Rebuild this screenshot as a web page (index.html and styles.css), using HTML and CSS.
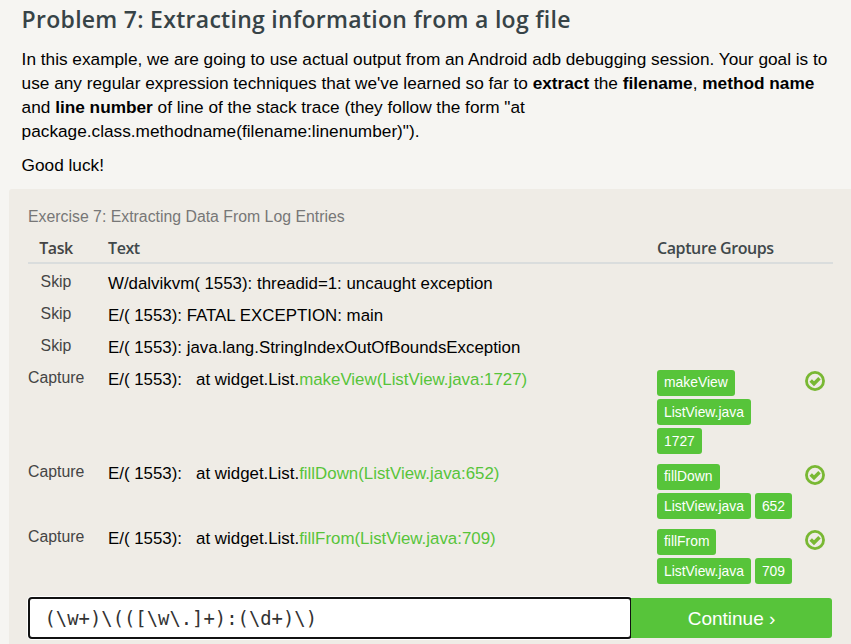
FILE: index.html
```html
<!DOCTYPE html>
<html lang="en">
<head>
<meta charset="utf-8">
<title>Problem 7: Extracting information from a log file</title>
<link rel="stylesheet" href="styles.css">
</head>
<body>
<svg class="defs" width="0" height="0"><symbol id="check" viewBox="0 0 20 20"><circle cx="10" cy="10" r="8.55" fill="none" stroke="currentColor" stroke-width="2.8"/><path d="M5.7 9.4 9 12.7 14.5 7.2" fill="none" stroke="currentColor" stroke-width="3.5"/></symbol></svg>
<section class="lesson">
<h1>Problem 7: Extracting information from a log file</h1>
<p>In this example, we are going to use actual output from an Android adb debugging session. Your goal is to use any regular expression techniques that we've learned so far to <b>extract</b> the <b>filename</b>, <b>method name</b> and <b>line number</b> of line of the stack trace (they follow the form "at package.class.methodname(filename:linenumber)").</p>
<p>Good luck!</p>
</section>
<section class="exercise">
<h2>Exercise 7: Extracting Data From Log Entries</h2>
<div class="row head"><div class="task">Task</div><div>Text</div><div>Capture Groups</div></div>
<div class="row first"><div class="task">Skip</div><div class="text">W/dalvikvm( 1553): threadid=1: uncaught exception</div></div>
<div class="row"><div class="task">Skip</div><div class="text">E/( 1553): FATAL EXCEPTION: main</div></div>
<div class="row"><div class="task">Skip</div><div class="text">E/( 1553): java.lang.StringIndexOutOfBoundsException</div></div>
<div class="row tall"><div class="task">Capture</div><div class="text">E/( 1553):   at widget.List.<span class="match">makeView(ListView.java:1727)</span></div><div class="groups"><span class="tag">makeView</span><span class="tag">ListView.java</span><span class="tag">1727</span></div><svg class="check"><use href="#check"/></svg></div>
<div class="row mid"><div class="task">Capture</div><div class="text">E/( 1553):   at widget.List.<span class="match">fillDown(ListView.java:652)</span></div><div class="groups"><span class="tag">fillDown</span><span class="tag">ListView.java</span><span class="tag">652</span></div><svg class="check"><use href="#check"/></svg></div>
<div class="row mid"><div class="task">Capture</div><div class="text">E/( 1553):   at widget.List.<span class="match">fillFrom(ListView.java:709)</span></div><div class="groups"><span class="tag">fillFrom</span><span class="tag">ListView.java</span><span class="tag">709</span></div><svg class="check"><use href="#check"/></svg></div>
<div class="answer"><div class="field">(\w+)\(([\w\.]+):(\d+)\)</div><div class="continue">Continue ›</div></div>
</section>
</body>
</html>
```

FILE: styles.css
```css
* { box-sizing: border-box; }
body { margin: 0; height: 644px; overflow: hidden; background: #f6f5f2; color: #000; font: 16.88px/24px "Liberation Sans", Arial, sans-serif; }
.defs { display: block; height: 0; }
.lesson { height: 189px; padding: 4px 20px 0 21.6px; font-size: 17.24px; }
h1 { margin: 0 0 13px; height: 30px; color: #374347; font: 600 23px/30px "Open Sans", sans-serif; letter-spacing: 0.28px; white-space: nowrap; }
p { margin: 0 0 10px; }
.exercise { height: 470px; margin-left: 9px; padding: 16px 18px 0 19px; background: #efece6; border-radius: 3px 0 0 0; }
h2 { margin: 0; height: 23px; color: #777; font-size: 15.84px; font-weight: 400; line-height: 23px; }
.row { display: grid; grid-template-columns: 56px 549px 172px 20px; height: 32px; }
.row > :nth-child(2), .row > :nth-child(3) { padding-left: 24px; }
.head { height: 36px; border-bottom: 2px solid #dadddd; color: #40484b; font: 600 16px/40px "Open Sans", sans-serif; letter-spacing: -0.4px; }
.first { margin-top: 3px; }
.task { height: 30px; color: #444; font-size: 15.84px; line-height: 30px; text-align: center; }
.head .task { font-size: 16px; line-height: 40px; }
.text { height: 32px; line-height: 34px; white-space: pre; }
.match { color: #57c43a; }
.groups { display: flex; flex-wrap: wrap; align-content: flex-start; gap: 3px 4px; padding: 7px 30px 0 0; }
.tag { height: 26px; padding: 0 7px; border-radius: 3px; background: #57c43a; color: #fff; font-size: 13.86px; line-height: 26px; }
.tag:first-child { line-height: 25px; }
.tall { height: 94px; }
.mid { height: 65px; }
.tall .task, .mid .task { text-align: left; }
.tall .groups { padding-right: 34px; }
.mid .groups { padding-right: 10px; }
.check { width: 20px; height: 20px; margin: 8px 0 0; color: #79b833; }
.answer { display: flex; height: 42px; margin-top: 10px; }
.field { width: 604px; border: 2px solid #111; border-radius: 4px; padding-left: 14.5px; background: #fff; box-shadow: 0 0 0 1px #fff; color: #333; font: 18.86px/39px "DejaVu Sans Mono", monospace; }
.continue { width: 201px; height: 40px; margin: 1px 0 0 -1px; border-radius: 0 3px 3px 0; background: #57c43a; color: #fff; font-size: 19px; line-height: 41px; text-align: center; }
```
